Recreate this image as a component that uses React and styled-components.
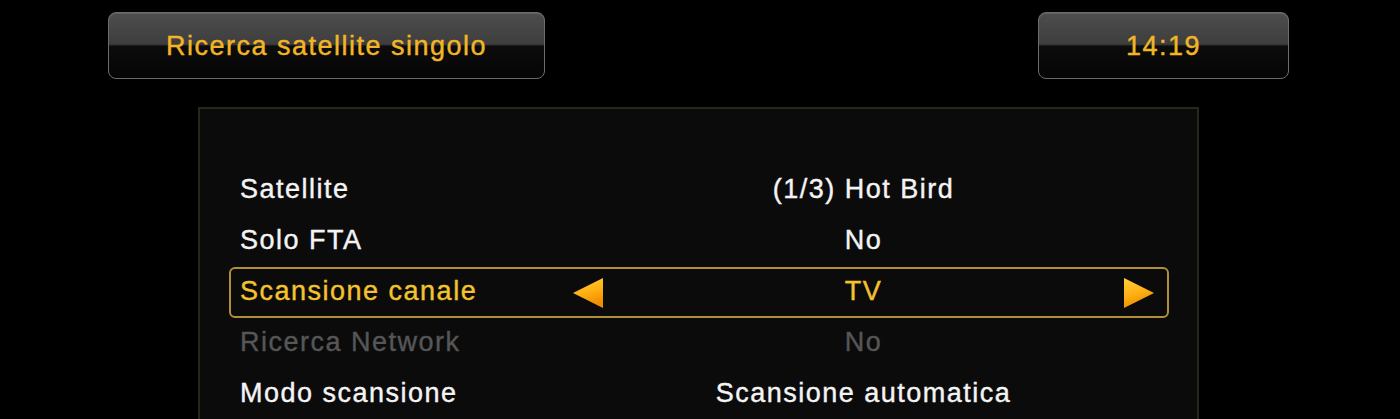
import React from 'react'
import styled, { createGlobalStyle } from 'styled-components'

const GlobalStyle = createGlobalStyle`
  html, body {
    margin: 0;
    padding: 0;
    background: #000;
    overflow: hidden;
  }
  body {
    font-family: "Liberation Sans", Arial, sans-serif;
  }
`

const Screen = styled.div`
  width: 1400px;
  height: 419px;
  background: #000;
  overflow: hidden;
  padding-top: 12px;
  box-sizing: border-box;
`

const Header = styled.div`
  display: flex;
  justify-content: space-between;
  padding: 0 111px 0 108px;
`

const GlassBox = styled.div`
  width: ${p => p.w}px;
  height: 67px;
  box-sizing: border-box;
  border: 1.5px solid #6c6c6c;
  border-radius: 8px;
  background: linear-gradient(
    to bottom,
    #4d4d4d 0%,
    #3e3e3e 48%,
    #0c0c0c 51%,
    #050505 100%
  );
  box-shadow: inset 0 1px 0 rgba(255, 255, 255, 0.12);
  display: flex;
  align-items: center;
  justify-content: center;
  color: #f2b526;
  font-size: 27px;
  letter-spacing: ${p => p.ls || 0}px;
  -webkit-text-stroke: 0.4px currentColor;
  padding-top: 2px;
`

const Panel = styled.div`
  margin: 28px 0 0 198px;
  width: 1001px;
  height: 400px;
  box-sizing: border-box;
  border: 2px solid #27261c;
  background: #0b0b0b;
  padding: 56px 28px 0 29px;
`

const Row = styled.div`
  height: 51px;
  box-sizing: border-box;
  display: grid;
  grid-template-columns: 332px 32px 1fr 32px;
  align-items: center;
  padding: 0 12px 0 9px;
  border: 2px solid ${p => (p.active ? '#b08f3a' : 'transparent')};
  border-radius: 6px;
  font-size: 27px;
  letter-spacing: 1.5px;
  -webkit-text-stroke: 0.4px currentColor;
  color: ${p => (p.active ? '#f4c22e' : p.disabled ? '#565656' : '#f4f4f4')};
`

const Label = styled.div`
  grid-column: 1;
  padding-bottom: 2px;
`

const Value = styled.div`
  grid-column: 3;
  text-align: center;
  padding-bottom: 2px;
`

const ArrowCell = styled.div`
  display: flex;
  align-items: center;
  justify-content: center;
  grid-column: ${p => p.col};
`

const Arrow = ({ dir }) => (
  <svg width="32" height="32" viewBox="0 0 32 32">
    <defs>
      <linearGradient id={`ag-${dir}`} x1="0" y1="0" x2="0.3" y2="1">
        <stop offset="0" stopColor="#ffcf3a" />
        <stop offset="0.55" stopColor="#ffb214" />
        <stop offset="1" stopColor="#f08e00" />
      </linearGradient>
    </defs>
    {dir === 'left' ? (
      <polygon points="1,16 31,1 31,31" fill={`url(#ag-${dir})`} />
    ) : (
      <polygon points="31,16 1,1 1,31" fill={`url(#ag-${dir})`} />
    )}
  </svg>
)

const rows = [
  { label: 'Satellite', value: '(1/3) Hot Bird' },
  { label: 'Solo FTA', value: 'No' },
  { label: 'Scansione canale', value: 'TV', active: true },
  { label: 'Ricerca Network', value: 'No', disabled: true },
  { label: 'Modo scansione', value: 'Scansione automatica' },
]

const App = () => {
  return (
    <Screen>
      <GlobalStyle />
      <Header>
        <GlassBox w={437} ls={1.5}>Ricerca satellite singolo</GlassBox>
        <GlassBox w={251} ls={1.5}>14:19</GlassBox>
      </Header>
      <Panel>
        {rows.map(r => (
          <Row key={r.label} active={r.active} disabled={r.disabled}>
            <Label>{r.label}</Label>
            {r.active && (
              <ArrowCell col={2}>
                <Arrow dir="left" />
              </ArrowCell>
            )}
            <Value>{r.value}</Value>
            {r.active && (
              <ArrowCell col={4}>
                <Arrow dir="right" />
              </ArrowCell>
            )}
          </Row>
        ))}
      </Panel>
    </Screen>
  )
}

export default App
